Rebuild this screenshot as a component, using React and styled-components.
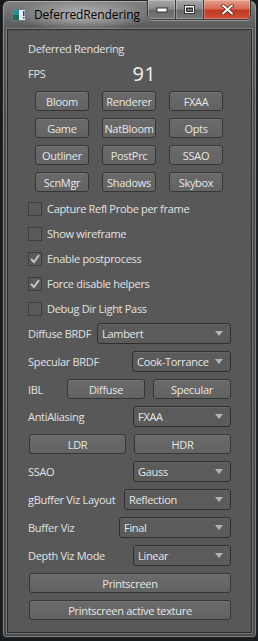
import React from "react";
import styled, { createGlobalStyle } from "styled-components";

const GlobalStyle = createGlobalStyle`
  html, body { margin: 0; padding: 0; }
  body {
    background: #151b1f;
    font-family: "Open Sans", "Noto Sans", sans-serif;
    width: 258px;
    height: 641px;
    overflow: hidden;
  }
`;

const Window = styled.div`
  box-sizing: border-box;
  margin-left: 2px;
  width: 255px;
  height: 638px;
  border: 1px solid #262626;
  border-radius: 7px 7px 4px 4px;
  background:
    radial-gradient(ellipse 70px 16px at 80px 14px, rgba(235,235,235,0.6), rgba(235,235,235,0) 100%),
    linear-gradient(180deg, #828282 0px, #6c6c6c 14px, #5a5a5a 28px, #4e4e4e 120px, #4a4a4a 100%);
  box-shadow: inset 0 0 0 1px rgba(255,255,255,0.28);
  display: flex;
  flex-direction: column;
  padding: 0 4px 4px 4px;
`;

const TitleBar = styled.div`
  height: 28px;
  display: flex;
  align-items: flex-start;
`;

const TitleLeft = styled.div`
  display: flex;
  align-items: center;
  height: 28px;
  gap: 8px;
  padding-left: 5px;
  flex: 1;
`;

const TitleText = styled.span`
  font-family: "Open Sans", "Noto Sans", sans-serif;
  font-size: 12px;
  color: #000;
  letter-spacing: -0.1px;
  margin-top: -1px;
`;

const Captions = styled.div`
  display: flex;
  margin-top: -1px;
  margin-right: 1px;
  border: 1px solid #3a3a3a;
  border-top: none;
  border-radius: 0 0 5px 5px;
  overflow: hidden;
  box-shadow: 0 1px 0 rgba(255,255,255,0.35);
`;

const CapBtn = styled.div`
  width: ${(p) => p.$w}px;
  height: 19px;
  display: flex;
  align-items: center;
  justify-content: center;
  background: ${(p) =>
    p.$close
      ? "linear-gradient(180deg, #e8a090 0%, #d66a55 45%, #c03a22 55%, #d0503a 100%)"
      : "linear-gradient(180deg, #a8a8a8 0%, #8a8a8a 45%, #6a6a6a 55%, #787878 100%)"};
  box-shadow: inset 0 0 0 1px rgba(255,255,255,0.25);
  & + & { border-left: 1px solid #3a3a3a; }
`;

const Client = styled.div`
  flex: 1;
  box-sizing: border-box;
  border: 1px solid #2c2c2c;
  box-shadow: 0 0 0 1px rgba(200,200,200,0.35);
  background: #585858;
  padding: 10px 20px 0 20px;
  display: flex;
  flex-direction: column;
  color: #e2e2e2;
  font-size: 11px;
  letter-spacing: -0.3px;
`;

const Label = styled.div`
  height: ${(p) => p.$h || 16}px;
  display: flex;
  align-items: center;
  white-space: nowrap;
`;

const FpsRow = styled.div`
  margin-top: 5px;
  height: 24px;
  display: flex;
  align-items: center;
`;

const FpsValue = styled.span`
  margin-left: 87px;
  font-size: 20px;
  color: #f0f0f0;
  letter-spacing: 0.3px;
`;

const ButtonGrid = styled.div`
  margin-top: 6px;
  padding-left: 7px;
  display: grid;
  grid-template-columns: repeat(3, 54px);
  grid-auto-rows: 20px;
  column-gap: 13px;
  row-gap: 7px;
`;

const Button = styled.div`
  box-sizing: border-box;
  height: ${(p) => p.$h || 20}px;
  width: ${(p) => (p.$w ? p.$w + "px" : "auto")};
  flex: ${(p) => (p.$grow ? 1 : "none")};
  display: flex;
  align-items: center;
  justify-content: center;
  border: 1px solid #363636;
  border-radius: 3px;
  background: linear-gradient(180deg, #6a6a6a 0%, #636363 100%);
  box-shadow: inset 0 1px 0 rgba(255,255,255,0.08);
  color: #e6e6e6;
  font-size: 11px;
  white-space: nowrap;
`;

const CheckList = styled.div`
  margin-top: 4px;
  display: flex;
  flex-direction: column;
`;

const CheckRow = styled.div`
  height: 25px;
  display: flex;
  align-items: center;
  gap: 5px;
`;

const Box = styled.div`
  box-sizing: border-box;
  width: 14px;
  height: 14px;
  border: 1px solid #3e3e3e;
  background: #5a5a5a;
  display: flex;
  align-items: center;
  justify-content: center;
`;

const Form = styled.div`
  margin-top: 2px;
  display: flex;
  flex-direction: column;
  gap: 7px;
`;

const Row = styled.div`
  height: ${(p) => p.$h || 21}px;
  display: flex;
  align-items: center;
  justify-content: space-between;
  gap: ${(p) => p.$gap || 0}px;
  padding-left: ${(p) => p.$pl || 0}px;
`;

const Combo = styled.div`
  box-sizing: border-box;
  width: ${(p) => p.$w}px;
  height: 21px;
  border: 1px solid #2f2f2f;
  border-radius: 3px;
  background: #5b5b5b;
  box-shadow: inset 0 1px 0 rgba(255,255,255,0.07);
  display: flex;
  align-items: center;
  padding: 0 7px 0 4px;
  color: #e6e6e6;
  white-space: nowrap;
`;

const ComboText = styled.span`
  flex: 1;
`;

const Arrow = () => (
  <svg width="8" height="5" viewBox="0 0 8 5">
    <path d="M0 0 H8 L4 5 Z" fill="#b4b4b4" />
  </svg>
);

const Check = () => (
  <svg width="10" height="10" viewBox="0 0 10 10">
    <path d="M1 5 L4 8 L9 1" fill="none" stroke="#c4c4c4" strokeWidth="2" />
  </svg>
);

const AppIcon = () => (
  <svg width="14" height="12" viewBox="0 0 14 12">
    <rect x="0.5" y="0.5" width="13" height="11" fill="#e8eef0" stroke="#6a7a80" />
    <rect x="1" y="1" width="6" height="10" fill="#2f8a9a" />
    <rect x="1" y="6" width="6" height="5" fill="#1f6a5a" />
    <rect x="11" y="2" width="1.5" height="5" fill="#2a4a8a" />
    <rect x="11" y="8" width="1.5" height="1.5" fill="#2a4a8a" />
  </svg>
);

const MinGlyph = () => (
  <svg width="12" height="6" viewBox="0 0 12 6">
    <rect x="1" y="1" width="10" height="4" fill="#fff" stroke="#333" strokeWidth="1" />
  </svg>
);
const MaxGlyph = () => (
  <svg width="11" height="9" viewBox="0 0 11 9">
    <rect x="0.5" y="0.5" width="10" height="8" fill="none" stroke="#333" />
    <rect x="1.5" y="1.5" width="8" height="6" fill="none" stroke="#fff" />
    <rect x="2.5" y="3.5" width="6" height="3" fill="none" stroke="#333" />
  </svg>
);
const CloseGlyph = () => (
  <svg width="13" height="11" viewBox="0 0 13 11">
    <path d="M2 1.5 L11 9.5 M11 1.5 L2 9.5" stroke="#5a1a10" strokeWidth="3.6" strokeLinecap="round" />
    <path d="M2 1.5 L11 9.5 M11 1.5 L2 9.5" stroke="#fff" strokeWidth="2" strokeLinecap="round" />
  </svg>
);

const grid = ["Bloom", "Renderer", "FXAA", "Game", "NatBloom", "Opts", "Outliner", "PostPrc", "SSAO", "ScnMgr", "Shadows", "Skybox"];
const checks = [
  ["Capture Refl Probe per frame", false],
  ["Show wireframe", false],
  ["Enable postprocess", true],
  ["Force disable helpers", true],
  ["Debug Dir Light Pass", false],
];

const ComboRow = ({ label, value, w }) => (
  <Row>
    <Label $h={21}>{label}</Label>
    <Combo $w={w}>
      <ComboText>{value}</ComboText>
      <Arrow />
    </Combo>
  </Row>
);

export default function App() {
  return (
    <>
      <GlobalStyle />
      <Window>
        <TitleBar>
          <TitleLeft>
            <AppIcon />
            <TitleText>DeferredRendering</TitleText>
          </TitleLeft>
          <Captions>
            <CapBtn $w={27}><MinGlyph /></CapBtn>
            <CapBtn $w={27}><MaxGlyph /></CapBtn>
            <CapBtn $w={46} $close><CloseGlyph /></CapBtn>
          </Captions>
        </TitleBar>
        <Client>
          <Label>Deferred Rendering</Label>
          <FpsRow>
            <span>FPS</span>
            <FpsValue>91</FpsValue>
          </FpsRow>
          <ButtonGrid>
            {grid.map((g) => (
              <Button key={g}>{g}</Button>
            ))}
          </ButtonGrid>
          <CheckList>
            {checks.map(([t, c]) => (
              <CheckRow key={t}>
                <Box>{c && <Check />}</Box>
                <span>{t}</span>
              </CheckRow>
            ))}
          </CheckList>
          <Form>
            <ComboRow label="Diffuse BRDF" value="Lambert" w={134} />
            <ComboRow label="Specular BRDF" value="Cook-Torrance" w={99} />
            <Row $h={20}>
              <Label $h={20}>IBL</Label>
              <Row $h={20} $gap={8}>
                <Button $w={78}>Diffuse</Button>
                <Button $w={78}>Specular</Button>
              </Row>
            </Row>
            <ComboRow label="AntiAliasing" value="FXAA" w={98} />
            <Row $h={20} $gap={8} $pl={1}>
              <Button $grow>LDR</Button>
              <Button $grow>HDR</Button>
            </Row>
            <ComboRow label="SSAO" value="Gauss" w={98} />
            <ComboRow label="gBuffer Viz Layout" value="Reflection" w={107} />
            <ComboRow label="Buffer Viz" value="Final" w={112} />
            <ComboRow label="Depth Viz Mode" value="Linear" w={98} />
            <Row $h={20} $pl={1}>
              <Button $grow>Printscreen</Button>
            </Row>
            <Row $h={20} $pl={1}>
              <Button $grow>Printscreen active texture</Button>
            </Row>
          </Form>
        </Client>
      </Window>
    </>
  );
}
